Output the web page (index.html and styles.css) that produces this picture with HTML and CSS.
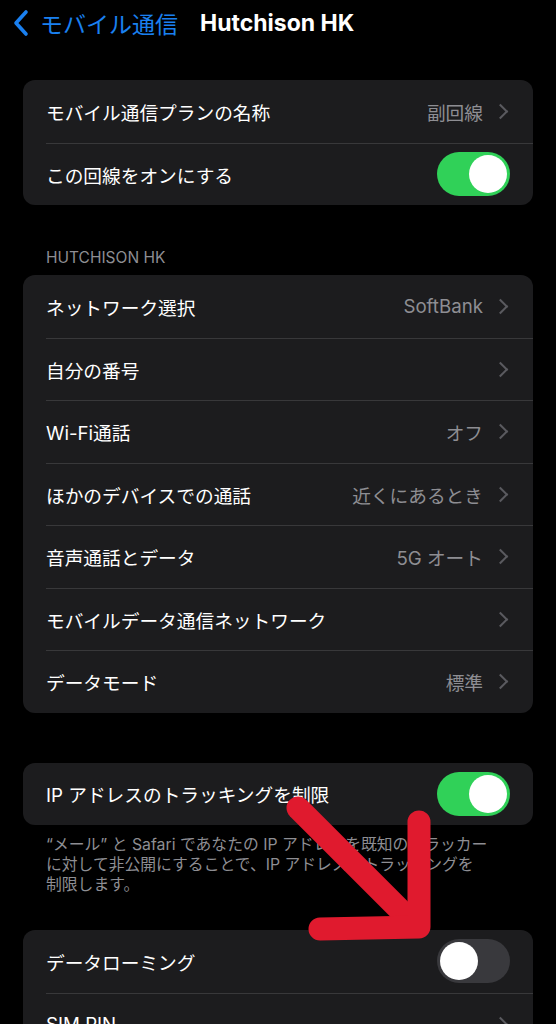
FILE: index.html
```html
<!DOCTYPE html>
<html lang="ja">
<head>
  <meta charset="UTF-8">
  <title>Hutchison HK</title>
  <link rel="stylesheet" href="styles.css">
</head>
<body>
  <header class="nav">
    <a class="back" href="#">
      <svg class="back-icon" width="18" height="28" viewBox="0 0 18 28">
        <path d="M14 3 L4 14 L14 25" fill="none" stroke="#1a80f0" stroke-width="3.6" stroke-linecap="round" stroke-linejoin="round"/>
      </svg>
      <span>モバイル通信</span>
    </a>
    <h1 class="title">Hutchison HK</h1>
  </header>

  <div class="content">
    <div class="group">
      <div class="row">
        <div class="row-body">
          <span class="label">モバイル通信プランの名称</span>
          <span class="value">副回線</span>
          <span class="chev"></span>
        </div>
      </div>
      <div class="row">
        <div class="row-body">
          <span class="label">この回線をオンにする</span>
          <span class="toggle on"><span class="knob"></span></span>
        </div>
      </div>
    </div>

    <div class="section-title">HUTCHISON HK</div>
    <div class="group">
      <div class="row">
        <div class="row-body">
          <span class="label">ネットワーク選択</span>
          <span class="value">SoftBank</span>
          <span class="chev"></span>
        </div>
      </div>
      <div class="row">
        <div class="row-body">
          <span class="label">自分の番号</span>
          <span class="chev"></span>
        </div>
      </div>
      <div class="row">
        <div class="row-body">
          <span class="label">Wi-Fi通話</span>
          <span class="value">オフ</span>
          <span class="chev"></span>
        </div>
      </div>
      <div class="row">
        <div class="row-body">
          <span class="label">ほかのデバイスでの通話</span>
          <span class="value">近くにあるとき</span>
          <span class="chev"></span>
        </div>
      </div>
      <div class="row">
        <div class="row-body">
          <span class="label">音声通話とデータ</span>
          <span class="value">5G オート</span>
          <span class="chev"></span>
        </div>
      </div>
      <div class="row">
        <div class="row-body">
          <span class="label">モバイルデータ通信ネットワーク</span>
          <span class="chev"></span>
        </div>
      </div>
      <div class="row">
        <div class="row-body">
          <span class="label">データモード</span>
          <span class="value">標準</span>
          <span class="chev"></span>
        </div>
      </div>
    </div>

    <div class="group spaced">
      <div class="row">
        <div class="row-body">
          <span class="label">IP アドレスのトラッキングを制限</span>
          <span class="toggle on"><span class="knob"></span></span>
        </div>
      </div>
    </div>
    <p class="footnote">“メール” と Safari であなたの IP アドレスを既知のトラッカー<br>に対して非公開にすることで、IP アドレスのトラッキングを<br>制限します。</p>

    <div class="group">
      <div class="row">
        <div class="row-body">
          <span class="label">データローミング</span>
          <span class="toggle"><span class="knob"></span></span>
        </div>
      </div>
      <div class="row">
        <div class="row-body">
          <span class="label">SIM PIN</span>
          <span class="chev"></span>
        </div>
      </div>
    </div>
  </div>

  <!-- red annotation arrow drawn over the screenshot -->
  <svg class="arrow" width="556" height="1024" viewBox="0 0 556 1024">
    <g fill="none" stroke="#e01a2e" stroke-width="23" stroke-linecap="round" stroke-linejoin="round">
      <path d="M298 808 L414 924"/>
      <path d="M419 822 L419 927 L320 929"/>
    </g>
  </svg>
</body>
</html>
```

FILE: styles.css
```css
:root {
  --bg: #000;
  --cell: #1c1c1e;
  --sep: #38383a;
  --text: #fff;
  --muted: #8e8e93;
  --chev: #5a5a5f;
  --blue: #1a80f0;
  --green: #30d158;
  --off: #39393d;
}
html, body {
  height: 1024px;
  overflow: hidden;
}
body {
  margin: 0;
  position: relative;
  background: var(--bg);
  color: var(--text);
  font-family: Inter, "Noto Sans CJK JP", sans-serif;
}
.nav {
  height: 46px;
  display: flex;
  align-items: center;
  padding-left: 12px;
}
.back {
  display: flex;
  align-items: center;
  gap: 10px;
  color: var(--blue);
  text-decoration: none;
  font-size: 23px;
  font-weight: 400;
}
.title {
  margin: 0 0 0 22px;
  font-size: 23px;
  font-weight: 700;
}
.content {
  padding: 34px 23px 0;
}
.group {
  background: var(--cell);
  border-radius: 12px;
  overflow: hidden;
}
.group.spaced {
  margin-top: 50px;
}
.row {
  padding-left: 23px;
}
.row-body {
  height: 62.5px;
  display: flex;
  align-items: center;
  padding-right: 23px;
  font-size: 18.7px;
}
.row + .row .row-body {
  border-top: 1px solid var(--sep);
  height: 61.5px;
}
.label {
  flex: 1;
  white-space: nowrap;
}
.value {
  color: var(--muted);
  margin-right: 12px;
}
.chev {
  width: 9px;
  height: 9px;
  border-top: 2.4px solid var(--chev);
  border-right: 2.4px solid var(--chev);
  transform: rotate(45deg);
  margin-right: 4px;
}
.toggle {
  width: 73px;
  height: 44px;
  border-radius: 22px;
  background: var(--off);
  display: flex;
  align-items: center;
  padding: 0 3px;
  box-sizing: border-box;
}
.toggle.on {
  background: var(--green);
  justify-content: flex-end;
}
.knob {
  width: 38px;
  height: 38px;
  border-radius: 50%;
  background: #fff;
}
.section-title {
  color: var(--muted);
  font-size: 15.5px;
  padding: 43px 23px 8px;
}
.footnote {
  margin: 0;
  padding: 10px 23px 35px;
  color: var(--muted);
  font-size: 15.8px;
  line-height: 20px;
}
.arrow {
  position: absolute;
  left: 0;
  top: 0;
}
```
